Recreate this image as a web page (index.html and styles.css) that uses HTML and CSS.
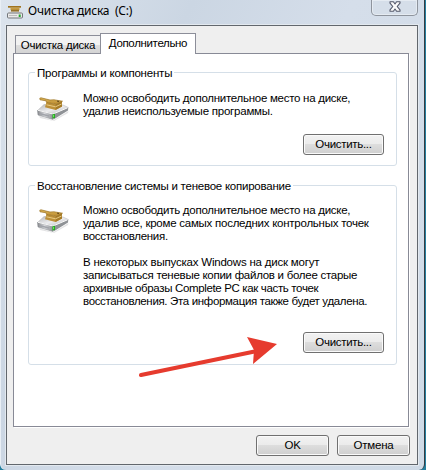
FILE: index.html
```
<!DOCTYPE html>
<html lang="ru">
<head>
<meta charset="utf-8">
<title>Очистка диска (C:)</title>
<link rel="stylesheet" href="styles.css">
</head>
<body>
<svg class="defs" width="0" height="0" aria-hidden="true">
  <defs>
    <linearGradient id="metal" x1="0" y1="0" x2="1" y2="1"><stop offset="0" stop-color="#b4b6b9"/><stop offset=".5" stop-color="#ececee"/><stop offset="1" stop-color="#b4b6ba"/></linearGradient>
    <linearGradient id="side" x1="0" y1="0" x2="1" y2="0"><stop offset="0" stop-color="#85878c"/><stop offset=".45" stop-color="#d6d7da"/><stop offset="1" stop-color="#8d9095"/></linearGradient>
    <linearGradient id="brush" x1="0" y1="0" x2="0" y2="1"><stop offset="0" stop-color="#e0b95c"/><stop offset="1" stop-color="#b8882c"/></linearGradient>
    <symbol id="drive" viewBox="0 0 32 24">
      <path d="M2 19 L16 23.5 L31.5 14 L31 16 L17 24 L3 21Z" fill="#c8c8ca" opacity=".5"/>
      <path d="M.5 13.5 L7 7.5 L26 8 L31.3 10.5 L16 17Z" fill="url(#metal)" stroke="#b2b3b5" stroke-width=".5"/>
      <path d="M.5 13.5 L16 17 L16 22.5 L1 18Z" fill="url(#side)" stroke="#85888d" stroke-width=".5"/>
      <path d="M16 17 L31.3 10.5 L31 13.5 L16.5 22.5Z" fill="#8f9296"/>
      <path d="M1 13.3 L16 17 L30.5 10.8" fill="none" stroke="#fafafa"/>
      <path d="M3 16 L12 18.3 L12 19.8 L3 17.5Z" fill="#a0a3a9"/>
      <path d="M15.5 17.3 L18 16.7 L18 21 L15.5 21.5Z" fill="#22a51f"/>
      <path d="M16.6 17.8v2.4" stroke="#6af45a"/>
      <path d="M9.5 5 L18.5 7.5 L25 4.5 L25 9.5 L18.5 13 L8 10.3Z" fill="#bd9038"/>
      <path d="M18.5 7.5 L25 4.5 L25 9.5 L18.5 13Z" fill="#a67b27"/>
      <path d="M2.8 1.2 L4 .8 L13 3 L17 2.8 L25.5 4.2 L18.5 7.3 L9.5 5.3 L9 3.8 L3 2.8Z" fill="url(#brush)" stroke="#98701f" stroke-width=".7"/>
      <path d="M9.5 7.8 L18.5 9.8 L24.5 7" fill="none" stroke="#ecd08a" stroke-width=".9"/>
      <path d="M20 4.1 L22 4.5" stroke="#5e4517"/>
    </symbol>
  </defs>
</svg>
<div class="window">
  <header class="titlebar">
    <svg class="app-icon" width="16" height="13" viewBox="0 0 16 13">
      <path d="M2.5 5h11l2 3H.5z" fill="#e2e2e2"/>
      <path d="M1 0h13v1.7H1z" fill="#a0741f"/>
      <path d="M3.5 1.7h9V4h-9z" fill="#c99d42"/>
      <path d="M4 4h8v1.5H4z" fill="#a98336"/>
      <path d="M5 3.5v2M7 3.5v2M9 3.5v2M11 3.5v2" stroke="#6f501a" stroke-width=".7"/>
      <rect x=".5" y="7" width="15" height="5" rx="1" fill="#e9e9e9" stroke="#74777b"/>
      <path d="M2 9.5h8" stroke="#bbb"/>
      <rect x="11.7" y="8.5" width="2" height="2.5" fill="#24a82e"/>
    </svg>
    <h1 class="title">Очистка диска&nbsp; (C:)</h1>
    <button class="close" aria-label="Закрыть">
      <svg width="12" height="11" viewBox="0 0 12 11"><path d="M1 .8h3.4L6 3 7.6.8H11v1.4L8.2 5.5 11 8.8v1.4H7.6L6 8 4.4 10.2H1V8.8l2.8-3.3L1 2.2z" fill="#fafafa" stroke="#54586a" stroke-width="1.1" stroke-linejoin="round"/></svg>
    </button>
  </header>
  <main class="client">
    <nav class="tabs">
      <div class="tab"><span class="w-tab1">Очистка диска</span></div>
      <div class="tab active"><span class="w-tab2">Дополнительно</span></div>
    </nav>
    <div class="panel">
      <section class="group programs">
        <h2 class="legend"><span class="w-leg1">Программы и компоненты</span></h2>
        <div class="content">
          <svg class="drive" width="32" height="24"><use href="#drive"/></svg>
          <div class="copy">
            <p><span class="w-a">Можно освободить дополнительное место на диске,</span><br><span class="w-b">удалив неиспользуемые программы.</span></p>
          </div>
        </div>
        <button class="button small">Очистить...</button>
      </section>
      <section class="group restore">
        <h2 class="legend"><span class="w-leg2">Восстановление системы и теневое копирование</span></h2>
        <div class="content">
          <svg class="drive" width="32" height="24"><use href="#drive"/></svg>
          <div class="copy">
            <p><span class="w-a">Можно освободить дополнительное место на диске,</span><br><span class="w-c">удалив все, кроме самых последних контрольных точек</span><br><span class="w-d">восстановления.</span></p>
            <p><span class="w-e">В некоторых выпусках Windows на диск могут</span><br><span class="w-f">записываться теневые копии файлов и более старые</span><br><span class="w-g">архивные образы Complete PC как часть точек</span><br><span class="w-h">восстановления. Эта информация также будет удалена.</span></p>
          </div>
        </div>
        <button class="button small">Очистить...</button>
      </section>
    </div>
    <footer class="actions">
      <button class="button">OK</button>
      <button class="button">Отмена</button>
    </footer>
  </main>
  <svg class="arrow" width="142" height="48" viewBox="0 0 142 48">
    <path d="M4 38 L120 14" stroke="#e63b2e" stroke-width="4" stroke-linecap="round"/>
    <path d="M110 0 L140 7 L116 27 L117 13Z" fill="#e63b2e"/>
  </svg>
</div>
</body>
</html>
```
FILE: styles.css
```
* { box-sizing: border-box; }
body {
  margin: 0;
  width: 426px;
  height: 470px;
  overflow: hidden;
  background: #247f9f;
  color: #000;
  font: 11.5px/13px "Liberation Sans", Arial, sans-serif;
}
h1, h2, p { margin: 0; font-weight: normal; }
button { font: inherit; color: inherit; padding: 0; }
.defs { position: absolute; }
.window {
  position: relative;
  width: 425px;
  height: 470px;
  padding: 0 6px 5px 5px;
  border-left: 1px solid #e9eff5;
  border-right: 1px solid #343c43;
  border-radius: 0 0 6px 6px;
  background: linear-gradient(115deg, #dce4ed 0, #cbd6e3 30%, #d5deea 55%, #cfdae6 100%);
}
.titlebar {
  display: flex;
  height: 25px;
  align-items: flex-start;
}
.app-icon { margin: 6px 0 0 1px; }
.title {
  margin: 3px 0 0 5px;
  font: 12px/16px "Noto Sans", sans-serif;
  letter-spacing: -.25px;
  white-space: nowrap;
}
.close {
  display: flex;
  justify-content: center;
  width: 47px;
  height: 16px;
  margin-left: auto;
  padding-top: 1px;
  border: 1px solid #8e949d;
  border-top: 0;
  border-radius: 0 0 5px 5px;
  background: #d5dee9;
  box-shadow: inset 0 0 0 1px #e5ebf2;
}
.client {
  width: 412px;
  height: 440px;
  border: 1px solid #62676d;
  padding: 7px 8px 0 6px;
  background: #efefef;
  box-shadow: 0 0 0 1px #e3e9ef;
}
.tabs {
  display: flex;
  height: 21px;
  align-items: flex-end;
  padding-left: 2px;
  position: relative;
  margin-bottom: -1px;
}
.tab {
  display: flex;
  justify-content: center;
  align-items: center;
  width: 85px;
  height: 19px;
  padding-top: 1px;
  border: 1px solid #8c8e99;
  border-right: 0;
  background: linear-gradient(#f2f2f2 50%, #dedede 50%, #d4d4d4);
  white-space: nowrap;
}
.tab.active {
  width: 96px;
  height: 21px;
  border-right: 1px solid #8c8e99;
  border-bottom: 0;
  background: #fff;
  padding: 0 0 1px;
}
.panel {
  width: 396px;
  height: 374px;
  border: 1px solid #888a96;
  background: #fff;
  padding: 18px 11px 0 14px;
  box-shadow: 1px 1px 0 #fff;
}
.group {
  display: flex;
  flex-direction: column;
  width: 369px;
  border: 1px solid #d5dfe8;
  border-radius: 3px;
}
.programs { height: 94px; }
.restore { height: 180px; margin-top: 19px; }
.legend {
  align-self: flex-start;
  height: 13px;
  margin: -6px 0 0 6px;
  padding: 0 2px;
  background: #fff;
  font-size: 11.5px;
  white-space: nowrap;
}
.content { display: flex; gap: 14px; padding: 12px 0 0 8px; }
.restore .content { padding-top: 11px; }
.drive { margin-top: 5px; flex: none; }
.copy { white-space: nowrap; }
.copy p + p { margin-top: 13px; }
.button {
  width: 73px;
  height: 21px;
  border: 1px solid #707070;
  border-radius: 3px;
  background: linear-gradient(#f2f2f2 0, #ebebeb 49%, #dddddd 50%, #cfcfcf 100%);
  box-shadow: inset 0 0 0 1px #fafafa;
  letter-spacing: -.2px;
}
.button.small { width: 81px; margin: auto 12px 10px auto; letter-spacing: -.3px; }
.restore .button.small { margin-bottom: 11px; }
.actions { display: flex; justify-content: flex-end; gap: 8px; margin: 8px -1px 0 0; }
.arrow { position: absolute; left: 136px; top: 337px; }

/* Per-line tracking keeps the narrow dialog-font measure */
.w-a, .w-f { letter-spacing: -.27px; }
.w-b { letter-spacing: -.23px; }
.w-c, .w-tab1 { letter-spacing: -.25px; }
.w-d { letter-spacing: -.3px; }
.w-e { letter-spacing: -.21px; }
.w-g { letter-spacing: -.35px; }
.w-h, .w-tab2 { letter-spacing: -.34px; }
.w-leg1 { letter-spacing: -.2px; }
.w-leg2 { letter-spacing: -.24px; }
```
